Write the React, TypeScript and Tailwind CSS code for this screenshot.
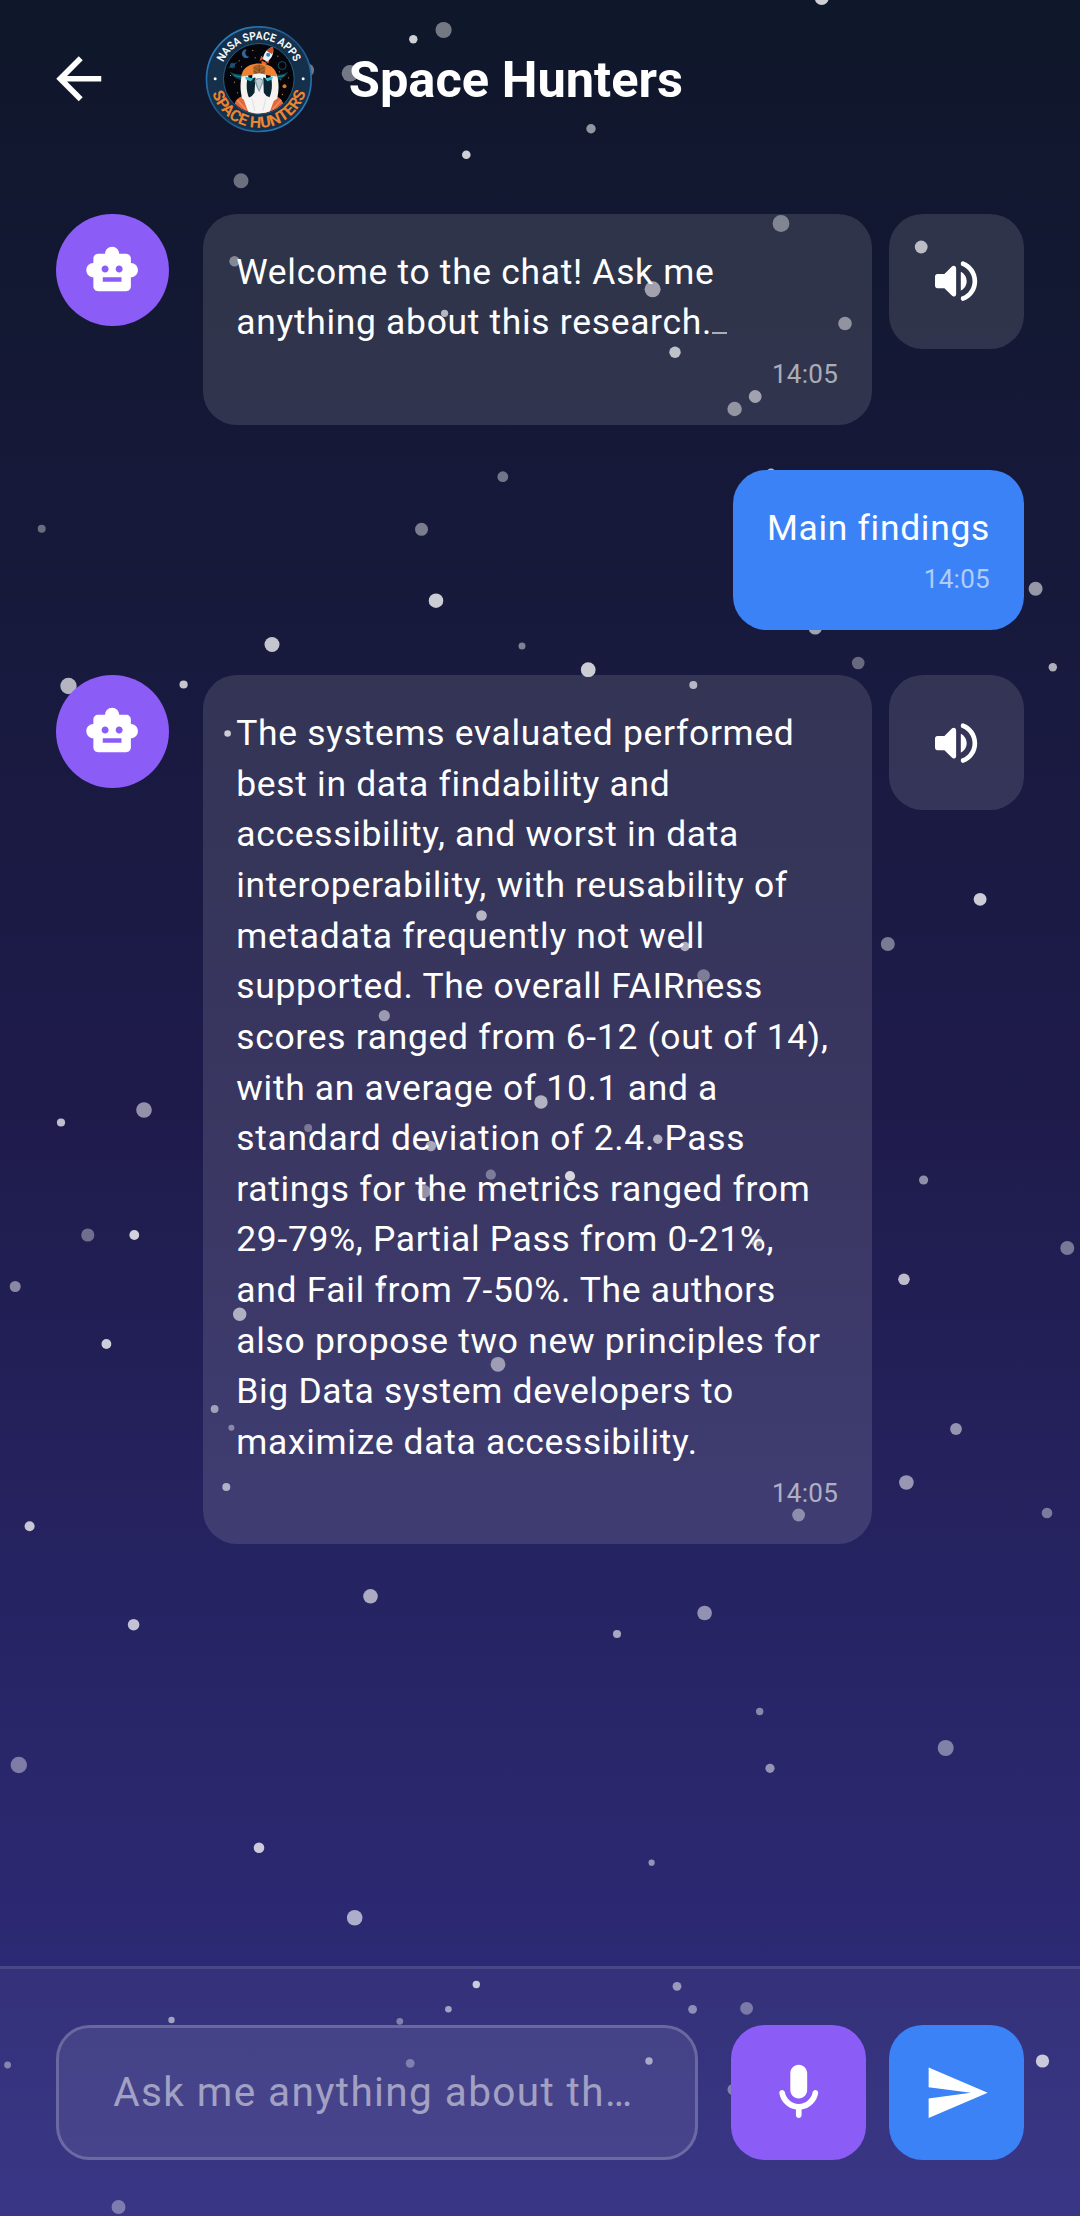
import React from "react";
import { MdArrowBack, MdSend, MdSmartToy } from "react-icons/md";

/* x, y, radius, opacity */
const STARS: [number, number, number, number][] = [
  [821.7, -2, 7, 0.8], [443.6, 30, 8.1, 0.42], [413.3, 39.3, 4.2, 0.8], [350, 73.3, 8.3, 0.42],
  [307, 70.3, 7, 0.42], [591, 128.7, 4.7, 0.55], [466.3, 154.7, 4.3, 0.8], [241, 180.7, 7.5, 0.38],
  [234.5, 261.3, 5.2, 0.42], [444.6, 313.3, 3.6, 0.65], [502.8, 476.7, 5.4, 0.4], [41.7, 528.7, 4, 0.36],
  [421.5, 529.3, 6.5, 0.43], [436, 600.7, 7.3, 0.78], [272, 644.5, 7.5, 0.75], [522, 646, 3.5, 0.45],
  [781, 223.5, 8.4, 0.4], [652.6, 289.3, 8, 0.55], [921.2, 247, 6.4, 0.68], [845, 323.5, 6.8, 0.47],
  [675, 352.3, 5.7, 0.7], [755.2, 396.5, 6.4, 0.55], [734.6, 409, 7.2, 0.48], [771, 473, 4.5, 0.7],
  [1035.6, 588.7, 7, 0.55], [815.2, 628, 6.6, 0.6], [858.2, 663, 6.3, 0.35], [588.2, 669.7, 7.4, 0.78],
  [1052.8, 667.3, 4.2, 0.65], [693.3, 685, 4, 0.65], [980.1, 899.3, 6.4, 0.78], [887.8, 944, 7, 0.42],
  [685, 946.5, 4.7, 0.6], [703.6, 975.5, 6.3, 0.36], [541, 1102, 6.7, 0.62], [68.5, 686, 8.2, 0.68],
  [183.6, 684.5, 4.1, 0.75], [227.6, 733.5, 3.3, 0.75], [481.5, 915.5, 5.3, 0.65], [384.3, 1015.7, 5.6, 0.5],
  [144, 1110, 7.8, 0.52], [61, 1122.5, 4.1, 0.72], [308.2, 1128, 4, 0.33], [430.8, 1146, 5.3, 0.57],
  [490.8, 1174.7, 5.1, 0.35], [424.3, 1191.5, 6.5, 0.45], [87.8, 1235, 6.6, 0.36], [134.3, 1235, 4.9, 0.8],
  [15.2, 1286.5, 5.5, 0.47], [381, 1285, 4.5, 0.28], [239.7, 1314.3, 6.7, 0.6], [106.4, 1344, 4.9, 0.78],
  [498, 1364.3, 7.4, 0.5], [214.6, 1409, 3.9, 0.52], [231.4, 1427.7, 3, 0.4], [226.3, 1487, 4, 0.6],
  [29.6, 1526.3, 5, 0.75], [657.8, 1139.3, 4.7, 0.6], [570, 1176, 5.1, 0.8], [756.3, 1240.5, 6, 0.38],
  [923.6, 1180, 4.6, 0.5], [1067.3, 1248, 7, 0.4], [904, 1279.3, 5.8, 0.7], [956, 1429, 5.9, 0.52],
  [906.4, 1482.5, 7.3, 0.53], [1047, 1513, 5.3, 0.4], [798.6, 1515, 6.4, 0.42], [370.5, 1596.3, 7.3, 0.62],
  [133.6, 1624.7, 5.8, 0.72], [704.6, 1613, 7.3, 0.5], [617, 1634, 4, 0.6], [759.7, 1711.5, 3.7, 0.45],
  [945.7, 1748, 8, 0.42], [770, 1768.3, 4.6, 0.5], [18.8, 1765, 8.2, 0.4], [259, 1847.7, 5.3, 0.76],
  [651.6, 1862.7, 3.1, 0.5], [354.7, 1917.7, 7.8, 0.62], [476.3, 1984.5, 3.7, 0.75], [448.4, 2009.3, 3.3, 0.55],
  [399.8, 2021.3, 3.4, 0.38], [171.5, 2020, 3.2, 0.55], [7.6, 2065, 3.4, 0.4], [410.2, 2063.3, 4.4, 0.33],
  [118.5, 2207, 7, 0.35], [677, 1986.3, 4.4, 0.5], [692.6, 2009.3, 4.4, 0.45], [746.6, 2008.3, 6.4, 0.35],
  [649, 2061, 3.7, 0.55], [733, 2089.5, 5.5, 0.38], [1042.5, 2061, 6.6, 0.74],
];

const ANSWER = [
  "The systems evaluated performed",
  "best in data findability and",
  "accessibility, and worst in data",
  "interoperability, with reusability of",
  "metadata frequently not well",
  "supported. The overall FAIRness",
  "scores ranged from 6-12 (out of 14),",
  "with an average of 10.1 and a",
  "standard deviation of 2.4. Pass",
  "ratings for the metrics ranged from",
  "29-79%, Partial Pass from 0-21%,",
  "and Fail from 7-50%. The authors",
  "also propose two new principles for",
  "Big Data system developers to",
  "maximize data accessibility.",
];

function Starfield() {
  return (
    <svg className="absolute inset-0 h-[2216px] w-[1080px]" viewBox="0 0 1080 2216" fill="white">
      {STARS.map(([x, y, r, o], i) => (
        <circle key={i} cx={x} cy={y} r={r} fillOpacity={o} />
      ))}
    </svg>
  );
}

function Logo() {
  return (
    <svg className="size-[112.5px] shrink-0" viewBox="37.5 37.5 337.5 337.5">
      <defs>
        <linearGradient id="ring" x1="0" y1="0" x2="1" y2="1">
          <stop offset="0" stopColor="#2f8fd6" />
          <stop offset="0.5" stopColor="#1c4f82" />
          <stop offset="1" stopColor="#2c8bcb" />
        </linearGradient>
        <clipPath id="inner">
          <circle cx="205" cy="205" r="104" />
        </clipPath>
        <path id="arcTop" d="M87 205 A118 118 0 0 1 323 205" />
        <path id="arcBottom" d="M59 206 A146 146 0 0 0 351 206" />
      </defs>
      <circle cx="205" cy="206" r="157" fill="#14304a" stroke="url(#ring)" strokeWidth="5" />
      <circle cx="205" cy="205" r="106" fill="#04060c" stroke="#2a6b96" strokeWidth="2.5" />
      <g clipPath="url(#inner)">
        {/* moon, planets and distant stars */}
        <path d="M170 117a13 13 0 1 0 6 22a12 12 0 0 1-6-22z" fill="#35639a" />
        <circle cx="126" cy="165" r="8" fill="#1b4565" />
        <path d="M114 172l25-16" stroke="#2d6f96" strokeWidth="2" />
        <circle cx="282" cy="227" r="6" fill="#d9772a" />
        <circle cx="275" cy="165" r="12" fill="none" stroke="#1b4d61" strokeWidth="3" />
        <g fill="#c87a3c">
          <circle cx="187" cy="120" r="2" /><circle cx="262" cy="137" r="2" />
          <circle cx="146" cy="151" r="2" /><circle cx="267" cy="184" r="2" />
          <circle cx="132" cy="215" r="2" /><circle cx="294" cy="202" r="2" />
          <circle cx="276" cy="252" r="2" /><circle cx="141" cy="247" r="2" />
        </g>
        <g fill="#b7d5e6">
          <circle cx="194" cy="142" r="1.5" /><circle cx="153" cy="169" r="1.5" />
          <circle cx="271" cy="208" r="1.5" /><circle cx="120" cy="195" r="1.5" />
        </g>
        {/* rocket */}
        <path d="M212 136l-5 16 14-9zM237 145l-3 14-12-8z" fill="#e2572b" />
        <path d="M213 150l17 8-16 8z" fill="#ee6b32" />
        <path d="M247 109c-16 5-27 17-30 37l14 7c16-12 20-28 16-44z" fill="#e9f2f7" />
        <path d="M247 109c-8 2-14 6-19 12l17 10c3-8 4-15 2-22z" fill="#c4512d" />
        <circle cx="233" cy="133" r="6" fill="#3986bd" />
        {/* wing glow */}
        <path d="M118 183c17 12 35 7 46 11l-3 17c-15-3-33-9-43-28zM293 183c-14 12-29 8-42 11l3 17c16-4 31-10 39-28z" fill="#145c70" opacity="0.8" />
        <path d="M130 195l35 7M282 195l-34 7" stroke="#38a9b5" strokeWidth="2" />
        {/* bird */}
        <path d="M131 290c0-22 15-30 33-37l84 0c18 7 30 16 33 36l-25 27h-96z" fill="#e5683c" />
        <path d="M155 190c-7 27-6 52 0 74l28 20-10-90zM258 190c8 24 8 50 2 74l-28 20 9-90z" fill="#f6f3ef" />
        <path d="M153 198c1-25 23-39 53-39s52 14 53 39l-23-3-29-5-32 5z" fill="#ef8233" />
        <path d="M188 169c10-8 27-8 37 0l-2 20-17 12-17-12z" fill="#a9652b" />
        <path d="M192 171l14 9 14-9M190 182l16 9 16-9M206 163v28" fill="none" stroke="#693d1c" strokeWidth="2" />
        <path d="M186 192l20-4 20 4 9 80-29 22-29-22z" fill="#f3f4f4" />
        <path d="M170 206l25-5-3 46-15 18c-9-18-10-38-7-59zM243 206l-25-5 2 46 15 18c9-18 11-38 8-59z" fill="#0a2430" />
        <path d="M164 198l25 6-8 8-15-5zM247 198l-24 6 8 8 14-5z" fill="#35bed0" />
        <path d="M192 212c3-13 24-13 27 0l-7 19-6 14-7-14z" fill="#7f99a7" />
        <path d="M196 210l10-5 10 5-10 29z" fill="#bdcdd4" />
        <path d="M160 268l22-10 14 5 9-6 11 6 15-6 20 11-13 36-32 14-33-14z" fill="#f7f5f3" />
        <path d="M184 264l9 37M226 264l-9 37" stroke="#cbd2d5" strokeWidth="2" />
        <path d="M140 268l26 29M272 268l-26 29" stroke="#f08b55" strokeWidth="5" />
      </g>
      <circle cx="74" cy="205" r="4.5" fill="#f4f7f9" />
      <circle cx="338" cy="205" r="4.5" fill="#f4f7f9" />
      <text fill="#f4f7f9" fontFamily="Roboto" fontWeight="700" fontSize="34" textLength="268" lengthAdjust="spacingAndGlyphs">
        <textPath href="#arcTop" startOffset="51">NASA SPACE APPS</textPath>
      </text>
      <text fill="#ee8430" fontFamily="Roboto" fontWeight="700" fontSize="47" textLength="376" lengthAdjust="spacingAndGlyphs">
        <textPath href="#arcBottom" startOffset="42">SPACE HUNTERS</textPath>
      </text>
    </svg>
  );
}

function VolumeIcon() {
  return (
    <svg className="size-[56.25px]" viewBox="0 0 24 24" fill="white">
      <path d="M3 10v4c0 .55.45 1 1 1h3l3.29 3.29c.63.63 1.71.18 1.71-.71V6.41c0-.89-1.08-1.34-1.71-.71L7 9H4c-.55 0-1 .45-1 1zm13.5 2c0-1.77-1.02-3.29-2.5-4.03v8.05c1.48-.73 2.5-2.25 2.5-4.02zM14 4.45v.2c0 .38.25.71.6.85C17.18 6.53 19 9.06 19 12s-1.82 5.47-4.4 6.5c-.36.14-.6.47-.6.85v.2c0 .63.63 1.07 1.21.85C18.6 19.11 21 15.84 21 12s-2.4-7.11-5.79-8.4c-.58-.23-1.21.22-1.21.85z" />
    </svg>
  );
}

function MicIcon() {
  return (
    <svg className="size-[67.5px]" viewBox="0 0 24 24" fill="white">
      <path d="M12 14c1.66 0 3-1.34 3-3V5c0-1.66-1.34-3-3-3S9 3.34 9 5v6c0 1.66 1.34 3 3 3zm5.91-3c-.49 0-.9.36-.98.85C16.52 14.2 14.47 16 12 16s-4.52-1.8-4.93-4.15c-.08-.49-.49-.85-.98-.85-.61 0-1.09.54-1 1.14.49 3 2.89 5.35 5.91 5.78V20c0 .55.45 1 1 1s1-.45 1-1v-2.08c3.02-.43 5.42-2.78 5.91-5.78.1-.6-.39-1.14-1-1.14z" />
    </svg>
  );
}

function Time({ value }: { value: string }) {
  return (
    <p className="mt-[5.5px] text-right text-[26px] leading-[41.5px] tracking-[0.3px] text-white/60">{value}</p>
  );
}

function BotMessage({ lines, time, typing }: { lines: string[]; time: string; typing?: boolean }) {
  return (
    <div className="flex items-start">
      <div className="mr-[33.75px] flex size-[112.5px] shrink-0 items-center justify-center rounded-full bg-[#8b5cf6]">
        <MdSmartToy className="size-[56.25px] text-white" />
      </div>
      <div className="mr-[16.875px] w-[669.375px] rounded-[33.75px] bg-white/12 px-[33.75px] pt-[33px] pb-[29.75px]">
        <p className="text-[35.44px] leading-[50.625px] tracking-[0.7px] whitespace-nowrap text-white">
          {lines.map((line, i) => (
            <span key={line} className="block">
              {line}
              {typing && i === lines.length - 1 && (
                <span className="ml-[0.5px] inline-block h-[2px] w-[14.5px] bg-white/60" />
              )}
            </span>
          ))}
        </p>
        <Time value={time} />
      </div>
      <button className="flex size-[135px] shrink-0 items-center justify-center rounded-[33.75px] bg-white/12">
        <VolumeIcon />
      </button>
    </div>
  );
}

export default function App() {
  return (
    <div className="relative h-[2216px] w-[1080px] overflow-hidden bg-linear-to-b/srgb from-[#0f172a] via-[#1e1b4b] to-[#312e81] font-[Roboto,sans-serif]">
      <Starfield />
      <div className="relative flex h-full flex-col">
        <header className="flex h-[157.5px] shrink-0 items-center pl-[45px]">
          <MdArrowBack className="mr-[90px] size-[67.5px] shrink-0 text-white" />
          <Logo />
          <h1 className="ml-[33.75px] pt-[2px] text-[50.6px] leading-[70px] font-bold text-white">Space Hunters</h1>
        </header>

        <main className="flex flex-1 flex-col gap-[45px] px-[56.25px] pt-[56.25px]">
          <BotMessage lines={["Welcome to the chat! Ask me", "anything about this research."]} time="14:05" typing />
          <div className="self-end rounded-[33.75px] bg-[#3b82f6] px-[33.75px] pt-[33px] pb-[29.75px]">
            <p className="text-[35.44px] leading-[50.625px] tracking-[0.7px] text-white">Main findings</p>
            <Time value="14:05" />
          </div>
          <BotMessage lines={ANSWER} time="14:05" />
        </main>

        <footer className="flex h-[250px] shrink-0 items-start border-t-[3px] border-white/10 bg-white/4 px-[56.25px] pt-[56.25px]">
          <div className="mr-[33.75px] flex h-[135px] flex-1 items-center rounded-[33.75px] border-[3px] border-white/20 bg-white/8 pb-[2px] pl-[54px]">
            <span className="text-[40.5px] leading-[60px] tracking-[1.4px] whitespace-nowrap text-white/50">Ask me anything about th…</span>
          </div>
          <button className="mr-[22.5px] flex size-[135px] items-center justify-center rounded-[33.75px] bg-[#8b5cf6]">
            <MicIcon />
          </button>
          <button className="flex size-[135px] items-center justify-center rounded-[33.75px] bg-[#3b82f6]">
            <MdSend className="size-[67.5px] text-white" />
          </button>
        </footer>
      </div>
    </div>
  );
}
